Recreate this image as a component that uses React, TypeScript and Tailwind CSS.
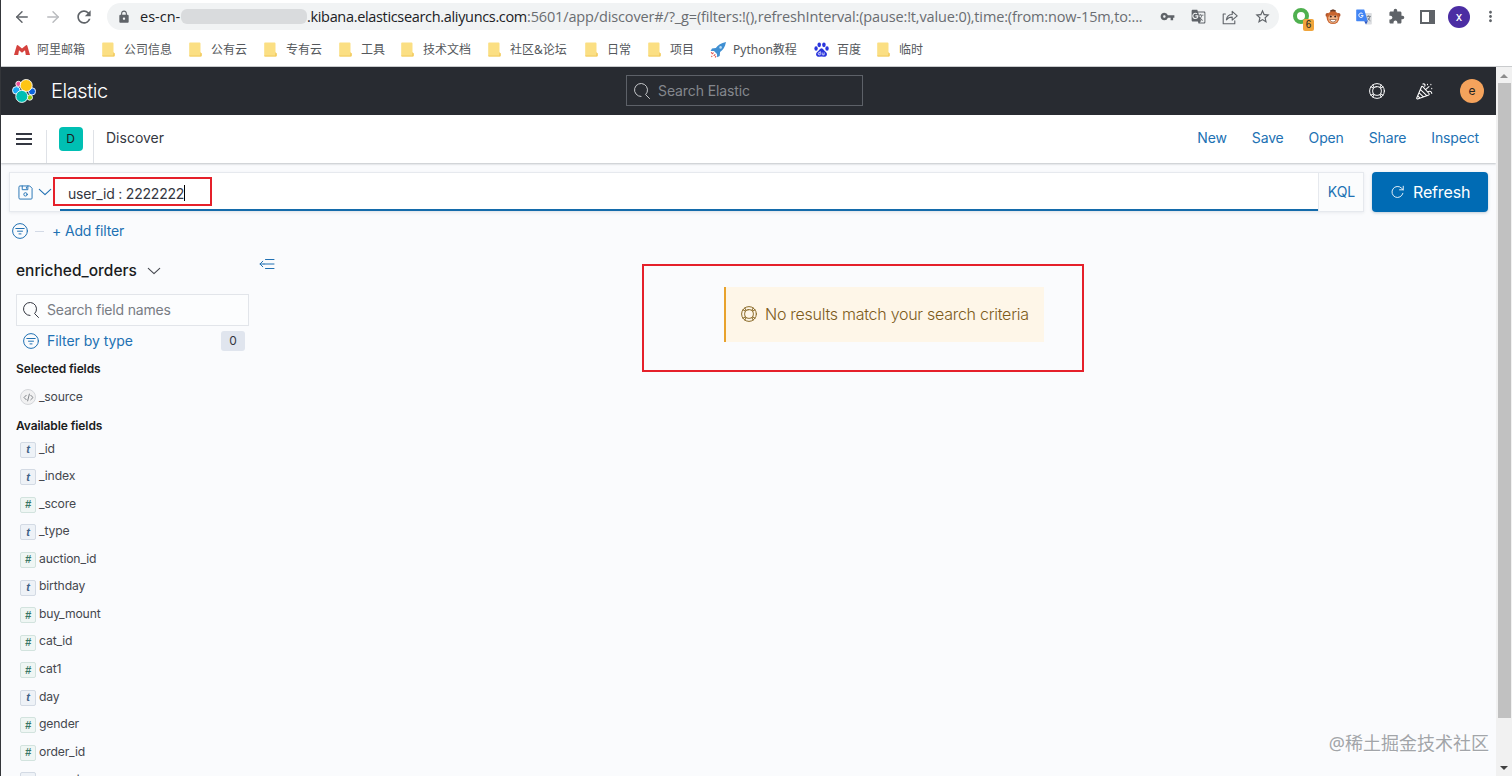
import type { ReactNode } from 'react';
import clsx from 'clsx';
import { ArrowLeft, ArrowRight } from 'lucide-react';
import { MdExtension, MdGTranslate, MdLock, MdMoreVert, MdRefresh, MdStarBorder, MdVpnKey } from 'react-icons/md';

interface IconProps {
  className?: string;
}

interface Bookmark {
  label: string;
  width: string;
  icon?: 'mail' | 'rocket' | 'baidu';
}

const BOOKMARKS: Bookmark[] = [
  { label: '阿里邮箱', width: 'w-[88px]', icon: 'mail' },
  { label: '公司信息', width: 'w-[87px]' },
  { label: '公有云', width: 'w-[75px]' },
  { label: '专有云', width: 'w-[75px]' },
  { label: '工具', width: 'w-[62px]' },
  { label: '技术文档', width: 'w-[87px]' },
  { label: '社区&论坛', width: 'w-[97px]' },
  { label: '日常', width: 'w-[63px]' },
  { label: '项目', width: 'w-[62px]' },
  { label: 'Python教程', width: 'w-[104px]', icon: 'rocket' },
  { label: '百度', width: 'w-[63px]', icon: 'baidu' },
  { label: '临时', width: 'w-[60px]' },
];

const FIELDS: { name: string; type: 't' | '#' }[] = [
  { name: '_id', type: 't' },
  { name: '_index', type: 't' },
  { name: '_score', type: '#' },
  { name: '_type', type: 't' },
  { name: 'auction_id', type: '#' },
  { name: 'birthday', type: 't' },
  { name: 'buy_mount', type: '#' },
  { name: 'cat_id', type: '#' },
  { name: 'cat1', type: '#' },
  { name: 'day', type: 't' },
  { name: 'gender', type: '#' },
  { name: 'order_id', type: '#' },
  { name: 'property', type: 't' },
];

function Stroke({ className, children }: { className?: string; children: ReactNode }) {
  return (
    <svg viewBox="0 0 16 16" fill="none" stroke="currentColor" strokeLinecap="round" strokeLinejoin="round" className={clsx('shrink-0', className)}>
      {children}
    </svg>
  );
}

function SearchIcon({ className }: IconProps) {
  return (
    <Stroke className={className}>
      <path d="M7 13.5A6.5 6.5 0 1 1 11.6 11.6L15.5 15.5" />
    </Stroke>
  );
}

function HelpIcon({ className }: IconProps) {
  return (
    <Stroke className={className}>
      <circle cx="8" cy="8" r="7.4" />
      <rect x="3.7" y="3.7" width="8.6" height="8.6" rx="3.4" />
      <path d="M3.8 2 5 4.2M2 3.8 4.2 5M12.2 2 11 4.2M14 3.8 11.8 5M3.8 14 5 11.8M2 12.2 4.2 11M12.2 14 11 11.8M14 12.2 11.8 11" />
    </Stroke>
  );
}

function FilterIcon({ className }: IconProps) {
  return (
    <Stroke className={className}>
      <circle cx="8" cy="8" r="7.4" />
      <path d="M3.8 5.5h8.4M5.5 8.2h5M7 10.9h2" />
    </Stroke>
  );
}

function ChevronIcon({ className }: IconProps) {
  return (
    <Stroke className={className}>
      <path d="m1.5 5 6.5 6 6.5-6" strokeWidth="1.3" />
    </Stroke>
  );
}

function CheerIcon({ className }: IconProps) {
  return (
    <Stroke className={className}>
      <path d="M5.2 3.6.7 14.1c-.2.6.2 1.1.8.9L12 11.2c.6-.3.6-.8.2-1.3L6.4 3.4c-.4-.4-1-.3-1.2.2ZM4.2 6.2l6 5.6M3 9.2l4 3.8M1.8 12l1.8 2.2M6.5 1c1.6-.6 2.4.8 1.7 2M9 6.2l3.2-2.8M11.2 8.2c1.7-1 3.7-.2 3.6 1.6M10.8 1.2v.4M14 1.2v.4M14.8 5v.3" />
    </Stroke>
  );
}

function ElasticLogo() {
  return (
    <svg viewBox="0 0 24 24" stroke="#fff" strokeWidth="0.9" className="-mt-px h-6 w-6">
      <circle cx="6.4" cy="4.9" r="2.6" fill="#f04e98" />
      <circle cx="4.3" cy="11.4" r="3.8" fill="#1ba9f5" />
      <circle cx="20" cy="12.4" r="3.6" fill="#0b64dd" />
      <circle cx="17.8" cy="18.5" r="2.7" fill="#93c90e" />
      <circle cx="14.2" cy="6.5" r="6" fill="#fec514" />
      <circle cx="9.8" cy="17.4" r="6" fill="#00bfb3" />
    </svg>
  );
}

function BookmarkIcon({ icon }: { icon?: Bookmark['icon'] }) {
  if (icon === 'mail') {
    return (
      <svg viewBox="0 0 16 12" className="h-3 w-4">
        <path d="M0 11 2.6 2Q3 .6 4.3 1.4L8 4.4l3.7-3Q13 .6 13.4 2L16 11h-4.2L11 6.2 8 8.8 5 6.2 4.2 11Z" fill="#d5423d" />
      </svg>
    );
  }
  if (icon === 'rocket') {
    return (
      <svg viewBox="0 0 16 16" className="h-4 w-4">
        <path d="M16 0C11 1 8 3 5.8 6L2 6.4.6 9l3.4.1 3 3 .1 3.2 2.6-1.4.4-3.8C13 8 15 5 16 0Z" fill="#3f8fd2" />
        <circle cx="10.6" cy="5.4" r="1.3" fill="#b9dcf5" />
        <path d="m3.6 10.6-1.8 1.6M5.3 12.3l-1.6 1.5M1.4 14.8l.8-.8M6 14l-.8 1.4M2 10.4l-1 .6" stroke="#e0504a" strokeWidth="1.1" />
      </svg>
    );
  }
  if (icon === 'baidu') {
    return (
      <svg viewBox="0 0 16 16" className="-mt-px h-[15px] w-[15px]" fill="#2a35dc">
        <ellipse cx="5.6" cy="3" rx="1.9" ry="2.6" />
        <ellipse cx="10.6" cy="3" rx="1.9" ry="2.6" />
        <ellipse cx="2.2" cy="7" rx="1.8" ry="2.4" />
        <ellipse cx="13.9" cy="7" rx="1.8" ry="2.4" />
        <path d="M8 6.7q1.4 0 2.3 1.6 1 1.4 2.6 2.7 1.5 1.6.6 3.4-1 1.7-3.2 1.2-2.3-.5-4.6 0-2.2.5-3.2-1.2-.9-1.8.6-3.4Q4.7 9.7 5.7 8.3 6.6 6.7 8 6.7Z" />
        <path d="M6.6 9.8v3.9h-.9a1.2 1.2 0 0 1 0-2.5h.9M8.7 11.2V13q0 .7.7.7h1.4v-2.5" fill="none" stroke="#fff" strokeWidth=".8" />
      </svg>
    );
  }
  return (
    <svg viewBox="0 0 13 15" className="h-[15px] w-[13px]">
      <path d="M1 .5h9.6q.9 0 .9.9v8.8l1.2 1.2v2.2q0 .9-.9.9H1q-.8 0-.8-.8V1.3Q.2.5 1 .5Z" fill="#fbdf83" />
      <path d="M.2 13.4q0 1.1.8 1.1h10.8q.9 0 .9-.9v-2.2l-1.2-1.2-.5 3.2Z" fill="#f2cb62" />
    </svg>
  );
}

function BrowserToolbar() {
  return (
    <div className="flex h-[33px] items-center pl-[12px] pr-[17px] text-[#5f6368]">
      <ArrowLeft className="h-[18px] w-[18px]" strokeWidth={1.9} />
      <ArrowRight className="ml-[13px] h-[18px] w-[18px] text-[#b9bbbe]" strokeWidth={1.9} />
      <MdRefresh className="ml-[12px] h-5 w-5" />
      <div className="ml-[13px] flex h-[27px] w-[1172px] items-center rounded-full bg-[#f1f3f4] pl-[10px] pr-[8px]">
        <MdLock className="h-[14px] w-[14px]" />
        <div className="ml-[9px] flex w-[1004px] items-center whitespace-nowrap font-['Open_Sans',sans-serif] text-[14.5px] text-[#6a6d71]">
          <span className="w-[41px] shrink-0 text-[#202124]">es-cn-</span>
          <span className="h-[15px] w-[126px] shrink-0 rounded-md bg-[#d9dbdd]" />
          <span className="tracking-[-0.33px] text-[#202124]">.kibana.elasticsearch.aliyuncs.com</span>
          <span className="tracking-[-0.14px]">:5601/app/discover#/?_g=(filters:!(),refreshInterval:(pause:!t,value:0),time:(from:now-15m,to:...</span>
        </div>
        <div className="ml-auto flex items-center gap-[16px]">
          <MdVpnKey className="h-[15px] w-[15px]" />
          <MdGTranslate className="h-[15px] w-[15px]" />
          <Stroke className="h-[16px] w-[16px]">
            <path d="M3.4 5H1.2v9.8h11.6v-3M4.4 10.8c.5-3.6 2.6-5.3 5.8-5.3V2.3l5 4.6-5 4.3V8.1c-2.6 0-4.4.8-5.8 2.7Z" strokeWidth="1.1" />
          </Stroke>
          <MdStarBorder className="h-[17px] w-[17px]" />
        </div>
      </div>
      <div className="ml-auto flex items-center">
        <span className="relative mr-[14px] h-[18px] w-[18px]">
          <span className="block h-4 w-4 rounded-full border-4 border-[#4fb04f]" />
          <span className="absolute left-[10px] top-[11px] flex h-3 w-[11px] items-center justify-center rounded-xs bg-[#f0a53c] font-['Liberation_Sans',sans-serif] text-[10px] text-[#222]">
            6
          </span>
        </span>
        <svg viewBox="0 0 16 16" className="mr-[15px] h-4 w-4">
          <path d="M5 1.6 8 .3l3 1.3-.6 1.6H5.5Z" fill="#6b3a22" />
          <circle cx="2.4" cy="6" r="1.9" fill="#b0552c" />
          <circle cx="13.6" cy="6" r="1.9" fill="#b0552c" />
          <circle cx="8" cy="8.6" r="6.4" fill="#c9652f" />
          <path d="M3.2 8.2q2-3.6 4.8-1.2 2.8-2.4 4.8 1.2Q13 14 8 14.3 3 14 3.2 8.2Z" fill="#f2b184" />
          <circle cx="5.8" cy="7.4" r="1" fill="#3a2018" />
          <circle cx="10.2" cy="7.4" r="1" fill="#3a2018" />
          <path d="M4.8 10.5h6.4q-.6 2.6-3.2 2.6t-3.2-2.6Z" fill="#fff" stroke="#6b3a22" strokeWidth=".6" />
        </svg>
        <svg viewBox="0 0 16 16" className="mr-[16px] h-4 w-4">
          <path d="M6 4h9q.8 0 .8.8v10q0 .8-.8.8H9.8Z" fill="#dcdee1" />
          <path d="M.8.4h7.4l3.6 11.8H.8q-.6 0-.6-.6V1q0-.6.6-.6Z" fill="#4285f4" />
          <path d="M8.2 12.2h3.6L10 15.6Z" fill="#2a56c6" />
          <path d="M6.7 4.8a2.2 2.2 0 1 0 .5 1.8H5" fill="none" stroke="#fff" />
          <path d="M10.8 7.4h4M12.6 6.4v1M14 7.6q-.6 2.6-2.4 3.8M11.8 8.8q1 2 2.6 3" fill="none" stroke="#747b85" strokeWidth=".9" />
        </svg>
        <MdExtension className="mr-[15px] h-[17px] w-[17px]" />
        <span className="mr-[13px] h-[14px] w-[15px] border-2 border-r-[6px] border-[#5f6368]" />
        <span className="mr-[12px] flex h-[22px] w-[22px] items-center justify-center rounded-full bg-[#4b2da3] font-[Roboto,sans-serif] text-[13px] text-white">
          x
        </span>
        <MdMoreVert className="-mr-[4px] h-[17px] w-[17px]" />
      </div>
    </div>
  );
}

function BookmarkBar() {
  return (
    <div className="flex h-[34px] items-center border-b border-[#c9cbcd] pl-[13px] font-['Noto_Sans','Noto_Sans_CJK_SC',sans-serif] text-[12px] text-[#55585c]">
      {BOOKMARKS.map((item) => (
        <div key={item.label} className={clsx('flex shrink-0 items-center whitespace-nowrap', item.width)}>
          <span className={clsx('flex', item.icon ? 'w-[23px]' : 'w-[22px]')}>
            <BookmarkIcon icon={item.icon} />
          </span>
          {item.label}
        </div>
      ))}
    </div>
  );
}

function ElasticHeader() {
  return (
    <header className="flex h-12 items-center bg-[#282b31] text-white">
      <div className="flex w-[625px] items-center pl-[11px]">
        <ElasticLogo />
        <span className="ml-[15px] text-[20px] font-light tracking-[-0.4px]">Elastic</span>
      </div>
      <div className="-mt-px flex h-[31px] w-[237px] items-center border border-[#5d6168] pl-[7px] text-[#84878d]">
        <SearchIcon className="h-4 w-4 text-[#c5c7ca]" />
        <span className="ml-[8px] text-[14px] tracking-[-0.1px]">Search Elastic</span>
      </div>
      <div className="ml-auto flex items-center pr-[12px]">
        <HelpIcon className="h-4 w-4" />
        <CheerIcon className="ml-[31px] h-[17px] w-[17px]" />
        <span className="ml-[27px] flex h-6 w-6 items-center justify-center rounded-full bg-[#f5a35c] text-[12px] text-[#222]">
          e
        </span>
      </div>
    </header>
  );
}

function NavBar() {
  return (
    <nav className="flex h-12 items-stretch bg-white shadow-[0_1px_2px_rgba(80,90,100,0.35)]">
      <div className="flex w-[45px] items-center pl-[15px]">
        <div className="-mt-px flex h-[12px] w-4 flex-col justify-between">
          <span className="h-[2px] bg-[#343741]" />
          <span className="h-[2px] bg-[#343741]" />
          <span className="h-[2px] bg-[#343741]" />
        </div>
      </div>
      <div className="mt-[15px] flex w-12 items-start justify-center border-x border-[#dfe2e7]">
        <span className="-mt-[3px] ml-px flex h-6 w-6 items-center justify-center rounded bg-[#00bfb3] text-[12px] text-[#1a1c21]">D</span>
      </div>
      <span className="-mt-[3px] ml-[12px] self-center text-[14px] text-[#343741]">Discover</span>
      <div className="-mt-[3px] ml-auto flex items-center gap-[25px] pr-[17px] text-[14px] tracking-[-0.15px] text-[#2171b3]">
        <span>New</span>
        <span>Save</span>
        <span>Open</span>
        <span>Share</span>
        <span>Inspect</span>
      </div>
    </nav>
  );
}

function QueryBar() {
  return (
    <div className="mt-[9px] flex h-10 pl-2 pr-2">
      <div className="flex flex-1 border border-[#e6e9ee] bg-[#fbfcfd] shadow-[0_1px_3px_rgba(80,100,120,0.1)]">
        <div className="flex w-[50px] items-center pl-[8px] text-[#2171b3]">
          <Stroke className="h-[15px] w-[15px]">
            <path d="M1 2q0-1 1-1h10.5L15 3.5V14q0 1-1 1H2q-1 0-1-1ZM4.5 1v4h6V1M9 2.3v1.2" />
            <circle cx="8" cy="10" r="1.8" />
          </Stroke>
          <ChevronIcon className="ml-[5px] h-[14px] w-[14px]" />
        </div>
        <div className="relative flex flex-1 items-center border-b-2 border-[#146bab] bg-white pl-[8px] text-[14px] tracking-[-0.2px] text-[#343741]">
          <span className="mt-[4px]">user_id : 2222222</span>
          <span className="mt-[3px] h-4 w-px bg-black" />
          <span className="absolute -left-[7px] top-[4px] h-[29px] w-[159px] border-2 border-[#e5202a]" />
        </div>
        <div className="flex w-[45px] items-center justify-center border-l border-[#e6e9ee] pb-[2px] pl-px text-[14px] text-[#2171b3]">KQL</div>
      </div>
      <button className="ml-2 flex w-[116px] items-center rounded bg-[#006bb4] pl-[19px] text-[16px] text-white shadow-[0_1px_3px_rgba(54,97,126,0.3)]">
        <Stroke className="h-[14px] w-[14px]">
          <path d="M13.6 9.5A6.3 6.3 0 1 1 12 3.6l2 1.9M14 1.4v4.1H9.800" />
        </Stroke>
        <span className="ml-[8px] tracking-[-0.15px]">Refresh</span>
      </button>
    </div>
  );
}

function FieldSidebar() {
  return (
    <aside className="w-[263px] shrink-0 pl-[15px] text-[#45484f]">
      <div className="flex h-10 items-center">
        <span className="text-[15.5px] font-medium text-[#1a1c21]">enriched_orders</span>
        <ChevronIcon className="ml-[10px] h-[14px] w-[14px]" />
      </div>
      <div className="mt-[3px] flex h-8 w-[233px] items-center border border-[#e2e5ea] bg-[#fcfdfe] pb-px pl-[6px] text-[14px] tracking-[-0.18px] text-[#787c84]">
        <SearchIcon className="h-4 w-4 text-[#343741]" />
        <span className="ml-[8px]">Search field names</span>
      </div>
      <div className="flex h-[30px] w-[229px] items-center pl-[7px] text-[14px] text-[#2171b3]">
        <FilterIcon className="h-4 w-4" />
        <span className="-mt-px ml-[8px] tracking-[-0.05px]">Filter by type</span>
        <span className="ml-auto flex h-5 w-6 items-center justify-center rounded-[3px] bg-[#e0e5ee] text-[12px] text-[#343741]">0</span>
      </div>
      <h3 className="mt-[4px] h-[18px] text-[12px] font-semibold leading-[18px] tracking-[-0.1px] text-[#1a1c21]">Selected fields</h3>
      <div className="mt-[9px] flex h-5 items-center pl-[4px] text-[12.2px] tracking-[-0.2px]">
        <span className="flex h-4 w-4 items-center justify-center rounded-full border border-[#d4d6da] bg-[#f1f1f2] text-[#6b6f76]">
          <Stroke className="h-[9px] w-[11px]">
            <path d="M4 4 0 8l4 4M12 4l4 4-4 4M9.5 2l-3 12" strokeWidth="1.5" />
          </Stroke>
        </span>
        <span className="ml-[3px]">_source</span>
      </div>
      <h3 className="mt-[10px] h-[18px] text-[12px] font-semibold leading-[18px] tracking-[-0.1px] text-[#1a1c21]">Available fields</h3>
      <ul>
        {FIELDS.map((field) => (
          <li key={field.name} className="flex h-[27.55px] items-center pl-[4px] text-[12.2px] tracking-[-0.15px]">
            <span
              className={clsx(
                "mt-[2px] flex h-4 w-4 items-center justify-center rounded-[2px] border font-['Liberation_Sans',sans-serif] text-[11px] font-bold italic leading-none",
                field.type === 't' ? 'border-[#d3dae4] bg-[#eef2f7] text-[#3f6187]' : 'border-[#d2e3de] bg-[#eff6f4] text-[#387765]',
              )}
            >
              {field.type}
            </span>
            <span className="ml-[3px]">{field.name}</span>
          </li>
        ))}
      </ul>
    </aside>
  );
}

function NoResults() {
  return (
    <div className="flex h-[108px] w-[442px] border-2 border-[#e5202a] pl-[80px] pt-[21px]">
      <div className="flex h-[55px] w-[320px] items-center border-l-2 border-[#e8a22c] bg-[#fef6e8] pb-px pl-[15px] text-[#8a6a28]">
        <HelpIcon className="h-4 w-4" />
        <span className="ml-[8px] whitespace-nowrap text-[16px] font-light tracking-[-0.27px] text-[#7d5c1c]">No results match your search criteria</span>
      </div>
    </div>
  );
}

function Scrollbar() {
  return (
    <div className="flex w-4 shrink-0 flex-col items-center bg-[#f1f1f1]">
      <span className="mt-[7px] border-x-4 border-b-4 border-x-transparent border-b-[#8c8c8c]" />
      <span className="mt-[5px] h-[635px] w-[13px] bg-[#c1c1c1]" />
      <span className="mb-[6px] mt-auto border-x-4 border-t-4 border-x-transparent border-t-[#404040]" />
    </div>
  );
}

export default function App() {
  return (
    <div className="relative flex h-[776px] w-[1512px] flex-col overflow-hidden border-l border-[#34363a] bg-white font-[Inter,sans-serif]">
      <BrowserToolbar />
      <BookmarkBar />
      <div className="flex min-h-0 flex-1">
        <main className="flex min-w-0 flex-1 flex-col overflow-hidden bg-[#fafbfd]">
          <ElasticHeader />
          <NavBar />
          <QueryBar />
          <div className="mt-[9px] flex h-5 shrink-0 items-center pl-[11px] text-[14px] text-[#2171b3]">
            <FilterIcon className="h-4 w-4" />
            <span className="ml-[7px] h-px w-[9px] bg-[#d3dae6]" />
            <span className="-mt-px ml-[8px] tracking-[-0.15px]">+ Add filter</span>
          </div>
          <div className="mt-[10px] flex min-h-0 flex-1">
            <FieldSidebar />
            <Stroke className="-ml-[5px] mt-[5px] h-4 w-4 text-[#2171b3]">
              <path d="M6.5 3.5H15M5 8h10M6.5 12.5H15M1 8h4M3.8 5.2 1 8l2.8 2.8" />
            </Stroke>
            <div className="ml-[367px] mt-[13px]">
              <NoResults />
            </div>
          </div>
        </main>
        <Scrollbar />
      </div>
      <span className="absolute bottom-[19px] right-[23px] whitespace-nowrap font-['Noto_Sans','Noto_Sans_CJK_SC',sans-serif] text-[18px] leading-7 text-[#a2a5a9] [text-shadow:1px_1px_0_#fff]">
        @稀土掘金技术社区
      </span>
    </div>
  );
}
